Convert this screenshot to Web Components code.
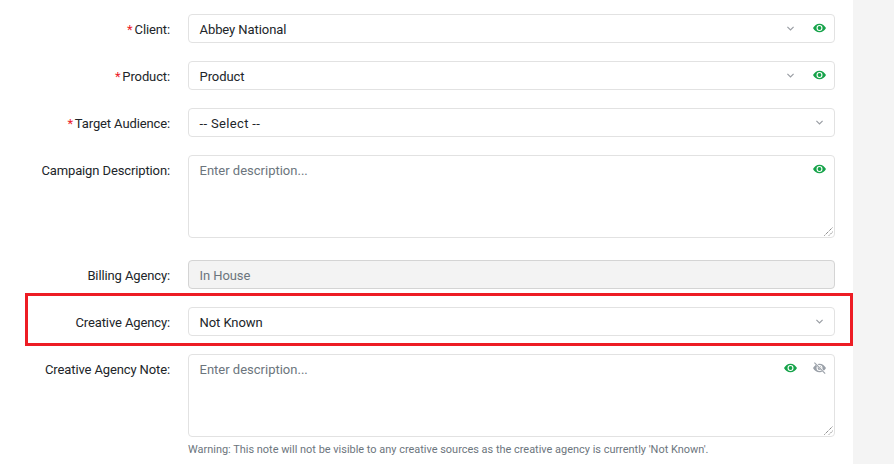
<!DOCTYPE html>
<html>
<head>
<meta charset="utf-8">
<title>Campaign</title>
<style>
  html, body { margin: 0; height: 100%; overflow: hidden; background: #f4f4f4; }
  body { font: 13px/20px Roboto, "Liberation Sans", sans-serif; color: #212529; }
</style>
</head>
<body>
<campaign-form>
  <form-row label="Client" required><select-field value="Abbey National" eye></select-field></form-row>
  <form-row label="Product" required><select-field value="Product" eye></select-field></form-row>
  <form-row label="Target Audience" required><select-field value="-- Select --" style="letter-spacing: 0.35px"></select-field></form-row>
  <form-row label="Campaign Description" gap="22"><note-field eye></note-field></form-row>
  <form-row label="Billing Agency"><readonly-field value="In House"></readonly-field></form-row>
  <form-row label="Creative Agency" highlight><select-field value="Not Known"></select-field></form-row>
  <form-row label="Creative Agency Note">
    <note-field eye hidden-eye></note-field>
    <small slot="help">Warning: This note will not be visible to any creative sources as the creative agency is currently 'Not Known'.</small>
  </form-row>
</campaign-form>

<script>
const EYE = `<svg width="13" height="10" viewBox="0 0 13 10"><path fill="#16a34a" fill-rule="evenodd" d="M6.500.7C3.600.7 1.300 2.700 0 5c1.300 2.300 3.600 4.300 6.500 4.300S11.700 7.300 13 5C11.700 2.700 9.400.7 6.500.7zm0 1.300a3 3 0 1 1 0 6 3 3 0 0 1 0-6z"/><circle cx="6.500" cy="5" r="1.900" fill="#16a34a"/></svg>`;
const EYE_OFF = `<svg width="13" height="12" viewBox="0 0 13 12"><path fill="#9aa0a8" fill-rule="evenodd" d="M6.500 1.700C3.600 1.700 1.300 3.700 0 6c1.300 2.300 3.600 4.300 6.500 4.300S11.700 8.300 13 6C11.700 3.700 9.400 1.700 6.500 1.700zm0 1.300a3 3 0 1 1 0 6 3 3 0 0 1 0-6z"/><circle cx="6.500" cy="6" r="1.900" fill="#9aa0a8"/><path stroke="#fff" stroke-width="2" d="M1.800 .4l10.200 11"/><path stroke="#9aa0a8" stroke-width="1.100" d="M1.400.6l10.800 11"/></svg>`;
const CHEVRON = `<svg width="7" height="5" viewBox="0 0 7 5"><path fill="none" stroke="#9a9ea4" stroke-width="1.200" d="M.4.800L3.500 3.900 6.600.8"/></svg>`;
const GRIP = `<svg width="9" height="9" viewBox="0 0 9 9"><path fill="none" stroke="#555" stroke-dasharray="1 1" d="M.5 8.500l8-8M5 8.500l3.500-3.500"/></svg>`;

class CampaignForm extends HTMLElement {
  constructor() {
    super();
    this.attachShadow({ mode: 'open' });
    this.shadowRoot.innerHTML = `
      <style>
        :host {
          display: flex;
          height: 464px;
        }
        main {
          width: 853px;
          box-sizing: border-box;
          height: 100%;
          padding: 14px 18px 0 0;
          background: #fff;
        }
      </style>
      <main><slot></slot></main>
    `;
  }
}

class FormRow extends HTMLElement {
  constructor() {
    super();
    this.attachShadow({ mode: 'open' });
    this.shadowRoot.innerHTML = `
      <style>
        :host {
          display: grid;
          grid-template-columns: 170px 1fr;
          column-gap: 18px;
          margin-bottom: 18px;
          position: relative;
        }
        label {
          text-align: right;
          padding-top: 6px;
          white-space: nowrap;
          letter-spacing: -0.12px;
        }
        b {
          color: #ec1c2b;
          font-weight: 400;
          margin-right: 2px;
        }
        #box {
          display: none;
          position: absolute;
          left: 25px;
          right: -18px;
          top: -14px;
          bottom: -10px;
          border: 3px solid #ed1c24;
          pointer-events: none;
        }
        :host([highlight]) #box {
          display: block;
        }
        ::slotted(small) {
          display: block;
          margin-top: 5px;
          font-size: 10.95px;
          line-height: 15px;
          color: #6c757d;
          white-space: nowrap;
        }
      </style>
      <label></label>
      <div><slot></slot><slot name="help"></slot></div>
      <div id="box"></div>
    `;
  }

  connectedCallback() {
    const label = this.shadowRoot.querySelector('label');
    label.innerHTML = (this.hasAttribute('required') ? '<b>*</b>' : '');
    label.append(this.getAttribute('label') + ':');
    if (this.hasAttribute('gap')) {
      this.style.marginBottom = this.getAttribute('gap') + 'px';
    }
  }
}

class SelectField extends HTMLElement {
  constructor() {
    super();
    this.attachShadow({ mode: 'open' });
    this.shadowRoot.innerHTML = `
      <style>
        :host {
          display: flex;
          align-items: center;
          box-sizing: border-box;
          height: 29px;
          padding: 0 8px 0 10.5px;
          border: 1px solid #e2e2e2;
          border-radius: 4px;
          background: #fff;
          letter-spacing: -0.07px;
        }
        span {
          flex: 1;
          padding-top: 2px;
        }
        i {
          display: flex;
          margin-bottom: 1px;
        }
        u {
          display: flex;
          margin: 0 0 1px 19px;
        }
        :host(:not([eye])) u {
          display: none;
        }
        :host(:not([eye])) i {
          margin-right: 3px;
        }
      </style>
      <span></span><i></i><u></u>
    `;
  }

  connectedCallback() {
    this.shadowRoot.querySelector('span').textContent = this.getAttribute('value');
    this.shadowRoot.querySelector('i').innerHTML = CHEVRON;
    if (this.hasAttribute('eye')) {
      this.shadowRoot.querySelector('u').innerHTML = EYE;
    }
  }
}

class ReadonlyField extends HTMLElement {
  constructor() {
    super();
    this.attachShadow({ mode: 'open' });
    this.shadowRoot.innerHTML = `
      <style>
        :host {
          display: block;
          box-sizing: border-box;
          height: 29px;
          padding: 5px 10.5px;
          border: 1px solid #d4d4d4;
          border-radius: 4px;
          background: #f3f3f3;
          color: #6c757d;
          letter-spacing: -0.07px;
        }
      </style>
      <span></span>
    `;
  }

  connectedCallback() {
    this.shadowRoot.querySelector('span').textContent = this.getAttribute('value');
  }
}

class NoteField extends HTMLElement {
  constructor() {
    super();
    this.attachShadow({ mode: 'open' });
    this.shadowRoot.innerHTML = `
      <style>
        :host {
          display: flex;
          justify-content: space-between;
          box-sizing: border-box;
          height: 83px;
          padding: 5px 8px 0 10.5px;
          border: 1px solid #e2e2e2;
          border-radius: 4px;
          position: relative;
        }
        span {
          color: #6c757d;
        }
        div {
          display: flex;
          align-items: flex-start;
          gap: 16px;
          padding-top: 3px;
        }
        svg:nth-child(2) {
          margin-top: -1px;
        }
        #grip {
          display: flex;
          position: absolute;
          right: 1px;
          bottom: 1px;
        }
      </style>
      <span>Enter description...</span>
      <div id="eyes"></div>
      <i id="grip"></i>
    `;
  }

  connectedCallback() {
    let eyes = '';
    if (this.hasAttribute('eye')) eyes += EYE;
    if (this.hasAttribute('hidden-eye')) eyes += EYE_OFF;
    this.shadowRoot.getElementById('eyes').innerHTML = eyes;
    this.shadowRoot.getElementById('grip').innerHTML = GRIP;
  }
}

customElements.define('campaign-form', CampaignForm);
customElements.define('form-row', FormRow);
customElements.define('select-field', SelectField);
customElements.define('readonly-field', ReadonlyField);
customElements.define('note-field', NoteField);
</script>
</body>
</html>
